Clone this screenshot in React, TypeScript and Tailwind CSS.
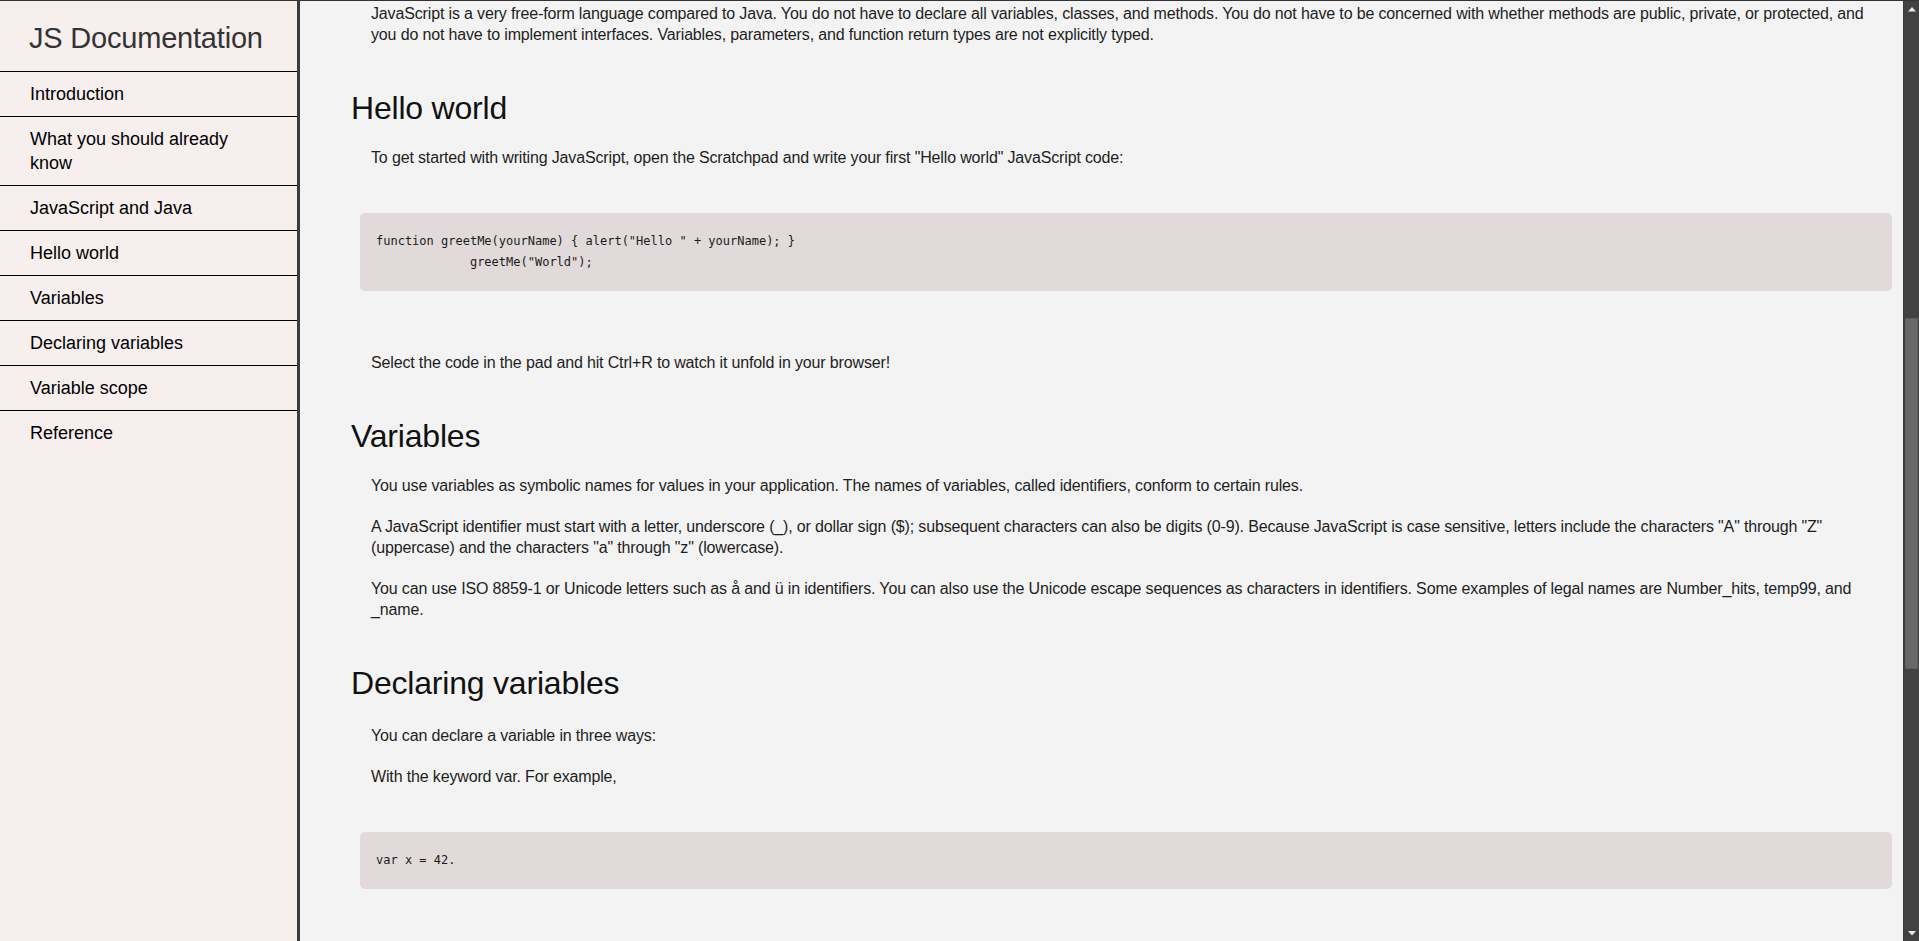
import { useEffect, useRef } from "react";

// ----------------------------------------------------------
// NAV ENTRIES (sidebar links)
// ----------------------------------------------------------
const NAV = [
  "Introduction",
  "What you should already know",
  "JavaScript and Java",
  "Hello world",
  "Variables",
  "Declaring variables",
  "Variable scope",
  "Reference",
];

const SANS = "font-['Liberation_Sans',Arial,sans-serif]";

function Header({ children, hRef }: { children: string; hRef?: React.Ref<HTMLHeadingElement> }) {
  return (
    <h2
      ref={hRef}
      className="mt-[42px] text-[32px] leading-[42px] font-normal text-[#111] tracking-[-0.2px]"
    >
      {children}
    </h2>
  );
}

function P({ children, first, top }: { children: React.ReactNode; first?: boolean; top?: string }) {
  return (
    <p
      className={`${top ?? (first ? "mt-[18px]" : "mt-[20px]")} ml-[20px] text-[16px] leading-[21px] text-[#1e1e1e] tracking-[-0.15px]`}
    >
      {children}
    </p>
  );
}

function Code({ children }: { children: string }) {
  return (
    <pre className="mt-[45px] mb-[61px] ml-[9px] rounded-[5px] bg-[#e2dada] px-4 py-[18px] font-['DejaVu_Sans_Mono',monospace] text-[12px] leading-[21px] text-[#1a1a1a] whitespace-pre">
      {children}
    </pre>
  );
}

// ----------------------------------------------------------
// SCROLLBAR (dark, like the browser one in the screenshot)
// ----------------------------------------------------------
function Scrollbar() {
  return (
    <div className="flex w-[16px] shrink-0 flex-col border-l border-[#383838] bg-[#424242]">
      <div className="flex h-[16px] items-center justify-center">
        <svg width="8" height="5" viewBox="0 0 8 5">
          <polygon points="4,0 8,4.5 0,4.5" fill="#e8e8e8" />
        </svg>
      </div>
      <div className="flex-1">
        <div className="mx-[1px] mt-[301px] h-[351px] bg-[#686868] border border-[#5e5e5e]" />
      </div>
      <div className="flex h-[16px] items-center justify-center">
        <svg width="8" height="5" viewBox="0 0 8 5">
          <polygon points="0,0 8,0 4,4.5" fill="#e8e8e8" />
        </svg>
      </div>
    </div>
  );
}

export default function App() {
  const scrollRef = useRef<HTMLDivElement>(null);
  const helloRef = useRef<HTMLHeadingElement>(null);

  // page is shown scrolled down to the "Hello world" part
  useEffect(() => {
    if (scrollRef.current && helloRef.current) {
      scrollRef.current.scrollTop = helloRef.current.offsetTop - 86;
    }
  }, []);

  return (
    <div className={`flex h-screen border-t border-[#333] bg-[#f3f3f3] ${SANS}`}>
      {/* SIDEBAR */}
      <nav className="flex w-[300px] shrink-0 flex-col border-r-[3px] border-[#3c3c3c] bg-[#f7eeee]">
        <div className="flex h-[71px] items-center border-b border-black pl-[29px] pt-[6px]">
          <h1 className="text-[29px] font-normal text-[#333] tracking-[-0.2px]">JS Documentation</h1>
        </div>
        <ul>
          {NAV.map((item, i) => (
            <li
              key={item}
              className={`${i < NAV.length - 1 ? "border-b border-black" : ""} py-[10px] pl-[30px] pr-[40px] text-[18px] leading-[24px] text-black`}
            >
              {item}
            </li>
          ))}
        </ul>
      </nav>

      {/* MAIN CONTENT */}
      <main
        ref={scrollRef}
        className="relative flex-1 overflow-hidden pl-[51px] pr-[11px] pb-[560px] text-[#1e1e1e]"
      >
        <Header>Introduction</Header>
        <P first>
          JavaScript is a cross-platform, object-oriented scripting language. It is a small and lightweight language.
          Inside a host environment (for example, a web browser), JavaScript can be connected to the objects of its
          environment to provide programmatic control over them.
        </P>
        <P>
          JavaScript contains a standard library of objects, such as Array, Date, and Math, and a core set of language
          elements such as operators, control structures, and statements. Core JavaScript can be extended for a variety
          of purposes by supplementing it with additional objects; for example:
        </P>
        <ul className="mt-[20px] ml-[60px] list-disc text-[16px] leading-[21px] tracking-[-0.15px]">
          <li>
            Client-side JavaScript extends the core language by supplying objects to control a browser and its Document
            Object Model (DOM). For example, client-side extensions allow an application to place elements on an HTML
            form and respond to user events such as mouse clicks, form input, and page navigation.
          </li>
          <li className="mt-[10px]">
            Server-side JavaScript extends the core language by supplying objects relevant to running JavaScript on a
            server. For example, server-side extensions allow an application to communicate with a database, provide
            continuity of information from one invocation to another of the application, or perform file manipulations
            on a server.
          </li>
        </ul>

        <Header>What you should already know</Header>
        <P first>This guide assumes you have the following basic background:</P>
        <ul className="mt-[20px] ml-[60px] list-disc text-[16px] leading-[21px] tracking-[-0.15px]">
          <li>A general understanding of the Internet and the World Wide Web (WWW).</li>
          <li className="mt-[10px]">Good working knowledge of HyperText Markup Language (HTML).</li>
          <li className="mt-[10px]">
            Some programming experience. If you are new to programming, try one of the tutorials linked on the main
            page about JavaScript.
          </li>
        </ul>

        <Header>JavaScript and Java</Header>
        <P first>
          JavaScript and Java are similar in some ways but fundamentally different in some others. The JavaScript
          language resembles Java but does not have Java's static typing and strong type checking. JavaScript follows
          most Java expression syntax, naming conventions and basic control-flow constructs which was the reason why it
          was renamed from LiveScript to JavaScript.
        </P>
        <P>
          In contrast to Java's compile-time system of classes built by declarations, JavaScript supports a runtime
          system based on a small number of data types representing numeric, Boolean, and string values. JavaScript has
          a prototype-based object model instead of the more common class-based object model. The prototype-based model
          provides dynamic inheritance; that is, what is inherited can vary for individual objects. JavaScript also
          supports functions without any special declarative requirements. Functions can be properties of objects,
          executing as loosely typed methods.
        </P>
        <P>
          JavaScript is a very free-form language compared to Java. You do not have to declare all variables, classes,
          and methods. You do not have to be concerned with whether methods are public, private, or protected, and you
          do not have to implement interfaces. Variables, parameters, and function return types are not explicitly
          typed.
        </P>

        <Header hRef={helloRef}>Hello world</Header>
        <P first>
          To get started with writing JavaScript, open the Scratchpad and write your first "Hello world" JavaScript code:
        </P>
        <Code>{'function greetMe(yourName) { alert("Hello " + yourName); }\n             greetMe("World");'}</Code>
        <P top="mt-0">Select the code in the pad and hit Ctrl+R to watch it unfold in your browser!</P>

        <Header>Variables</Header>
        <P first>
          You use variables as symbolic names for values in your application. The names of variables, called
          identifiers, conform to certain rules.
        </P>
        <P>
          A JavaScript identifier must start with a letter, underscore (_), or dollar sign ($); subsequent characters can
          also be digits (0-9). Because JavaScript is case sensitive, letters include the characters "A" through "Z"
          (uppercase) and the characters "a" through "z" (lowercase).
        </P>
        <P>
          You can use ISO 8859-1 or Unicode letters such as å and ü in identifiers. You can also use the Unicode escape
          sequences as characters in identifiers. Some examples of legal names are Number_hits, temp99, and _name.
        </P>

        <Header>Declaring variables</Header>
        <P top="mt-[21px]">You can declare a variable in three ways:</P>
        <P>With the keyword var. For example,</P>
        <Code>var x = 42.</Code>
        <P top="mt-0">This syntax can be used to declare both local and global variables.</P>
        <P>
          By simply assigning it a value. For example, x = 42. This always declares a global variable. It generates a
          strict JavaScript warning. You shouldn't use this variant.
        </P>

        <Header>Variable scope</Header>
        <P first>
          When you declare a variable outside of any function, it is called a global variable, because it is available
          to any other code in the current document. When you declare a variable within a function, it is called a
          local variable, because it is available only within that function.
        </P>

        <Header>Reference</Header>
        <P first>All the documentation in this page is taken from MDN.</P>
      </main>

      <Scrollbar />
    </div>
  );
}
